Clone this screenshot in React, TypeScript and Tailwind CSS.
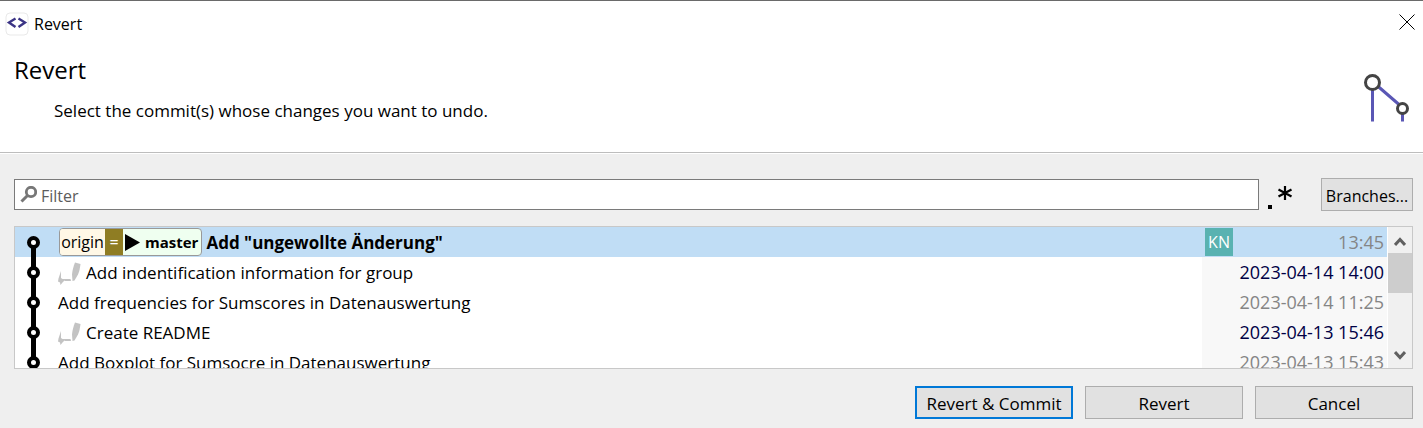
import type { ReactNode } from "react";

type Commit = {
  message: string;
  time: string;
  recent?: boolean;
  edited?: boolean;
  head?: boolean;
};

const commits: Commit[] = [
  { message: 'Add "ungewollte Änderung"', time: "13:45", head: true },
  { message: "Add indentification information for group", time: "2023-04-14 14:00", recent: true, edited: true },
  { message: "Add frequencies for Sumscores in Datenauswertung", time: "2023-04-14 11:25" },
  { message: "Create README", time: "2023-04-13 15:46", recent: true, edited: true },
  { message: "Add Boxplot for Sumsocre in Datenauswertung", time: "2023-04-13 15:43" },
];

function AppIcon() {
  return (
    <svg width="24" height="24" viewBox="0 0 24 24" fill="none" aria-hidden="true">
      <rect x="1" y="1" width="22" height="22" rx="4" fill="#fff" stroke="#e9e9e9" />
      <path d="M10.500 6.500 4 10.500l6.500 4.500M13.500 6.500 20 10.500l-6.500 4.500" stroke="#3b3485" strokeWidth="2.400" />
    </svg>
  );
}

function BranchLogo() {
  return (
    <svg width="46" height="50" viewBox="0 0 46 50" fill="none" aria-hidden="true">
      <path d="M9.500 17v31.500M14 12.500l22 19M39.500 40v8.500" stroke="#5a57b5" strokeWidth="3" />
      <circle cx="9.500" cy="9.500" r="7" fill="#fff" stroke="#444" strokeWidth="3" />
      <circle cx="39.500" cy="35.500" r="5" fill="#fff" stroke="#444" strokeWidth="3" />
    </svg>
  );
}

function SearchIcon() {
  return (
    <svg width="17" height="18" viewBox="0 0 17 18" fill="none" stroke="#777" aria-hidden="true">
      <circle cx="11" cy="6" r="4.700" strokeWidth="2.800" />
      <path d="M7.500 9.500 1.500 15.500" strokeWidth="3" />
    </svg>
  );
}

function GraphNode({ first }: { first?: boolean }) {
  return (
    <svg className="block" width="43" height="30" viewBox="0 0 43 30" aria-hidden="true">
      <rect x="16" y={first ? 15 : 0} width="5" height={first ? 15 : 30} fill="#000" />
      <circle cx="18.500" cy="15.500" r="4.500" fill="#fff" stroke="#000" strokeWidth="4" />
    </svg>
  );
}

function EditedIcon() {
  return (
    <svg className="shrink-0" width="28" height="30" viewBox="0 0 28 30" fill="#c3c3c3" aria-hidden="true">
      <path d="M3 14v7l1.500 1h8l0.500 2H7l-0.500-0.500L4.500 25.500 2.500 28 2 25.500 0 24.500 0.500 21.500z" />
      <path d="M17 5.500l5.500 1.500c-0.500 4-1 7-2.500 10.500l-3.500 6-2 0.500-0.500-6.500c0.500-5 1.500-8 3-12z" />
    </svg>
  );
}

function RefBadge() {
  return (
    <span className="ml-px mr-1 flex h-7 overflow-hidden rounded border border-[#999] bg-[#effff0] text-base leading-[26px]">
      <span className="w-[45px] bg-[#fff8e6] text-center">origin</span>
      <span className="w-[18px] bg-[#8f7d23] text-center text-white">=</span>
      <svg className="ml-px mt-[5px]" width="17" height="17" viewBox="0 0 17 17" aria-hidden="true">
        <path d="M1 0v17L16 8.500z" fill="#000" />
      </svg>
      <span className="pl-1 pr-[3px] text-[15px] font-bold">master</span>
    </span>
  );
}

function DialogButton({ children, primary }: { children: ReactNode; primary?: boolean }) {
  return (
    <button
      type="button"
      className={
        primary
          ? "h-[33px] w-[158px] border-2 border-[#0078d7] bg-[#e1e1e1] pt-0.5"
          : "h-[33px] w-[158px] border border-[#adadad] bg-[#e1e1e1] pt-0.5"
      }
    >
      {children}
    </button>
  );
}

export default function App() {
  return (
    <div className="flex h-screen flex-col bg-[#efefef] font-['Open_Sans','Noto_Sans',sans-serif] text-[17px] leading-6 text-black">
      <header className="border-b border-[#bdbdbd] bg-white">
        <div className="flex h-[46px] items-center justify-between border-t border-[#6a6a6a] pl-[5px] pr-2">
          <div className="flex items-center gap-[5px]">
            <AppIcon />
            <span className="text-base">Revert</span>
          </div>
          <button type="button" aria-label="Close" className="-mt-1">
            <svg width="16" height="16" viewBox="0 0 16 16" stroke="#000" fill="none" aria-hidden="true">
              <path d="M0.500 0.500l15 15M15.500 0.500l-15 15" />
            </svg>
          </button>
        </div>
        <div className="flex h-[106px] justify-between px-3.5">
          <div className="pt-2">
            <h1 className="text-2xl leading-8">Revert</h1>
            <p className="pl-10 pt-[13px]">Select the commit(s) whose changes you want to undo.</p>
          </div>
          <div className="pt-[27px]">
            <BranchLogo />
          </div>
        </div>
      </header>

      <main className="flex min-h-0 flex-1 flex-col border-t border-white pb-[9px] pl-3.5 pr-2.5 pt-6">
        <div className="flex items-center">
          <label className="flex h-[31px] flex-1 items-center gap-1 border border-[#7a7a7a] bg-white pl-[5px]">
            <SearchIcon />
            <input
              type="text"
              aria-label="Filter"
              placeholder="Filter"
              className="h-full min-w-0 flex-1 bg-transparent pt-0.5 text-base outline-none placeholder:text-[#5c5c5c]"
            />
          </label>
          <button type="button" aria-label="Regular expression" className="flex w-[62px] justify-start pl-[9px]">
            <svg width="26" height="28" viewBox="0 0 26 28" aria-hidden="true">
              <rect x="0" y="24" width="4" height="4" fill="#000" />
              <path d="M17 5v14M10.500 8.500l13 7M23.500 8.500l-13 7" stroke="#000" strokeWidth="2.200" />
            </svg>
          </button>
          <button type="button" className="h-[33px] w-[92px] border border-[#adadad] bg-[#e1e1e1] pt-0.5 text-base">
            Branches...
          </button>
        </div>

        <div className="mt-[15px] flex min-h-0 flex-1 overflow-hidden border border-[#c8c8c8] bg-white">
          <div className="min-w-0 flex-1 overflow-hidden">
            <table className="w-full table-fixed border-collapse">
              <colgroup>
                <col className="w-[43px]" />
                <col />
                <col className="w-[185px]" />
              </colgroup>
              <tbody>
                {commits.map((commit) => (
                  <tr key={commit.message} className={commit.head ? "h-[30px] bg-[#c0ddf5]" : "h-[30px] bg-white"}>
                    <td className="p-0">
                      <GraphNode first={commit.head} />
                    </td>
                    <td className="p-0">
                      <div className="flex h-[30px] items-center whitespace-nowrap">
                        {commit.head && <RefBadge />}
                        {commit.edited && <EditedIcon />}
                        <span className={commit.head ? "pt-px font-bold" : "pt-px"}>{commit.message}</span>
                      </div>
                    </td>
                    <td className={commit.head ? "p-0" : "bg-[#f8f8f8] p-0"}>
                      <div className="flex h-[30px] items-center justify-between px-[3px]">
                        {commit.head && (
                          <span className="flex size-7 items-center justify-center bg-[#59b2b1] text-base text-white">
                            KN
                          </span>
                        )}
                        <time
                          className={
                            commit.recent
                              ? "ml-auto text-lg leading-6 text-[#000045]"
                              : "ml-auto text-lg leading-6 text-[#858585]"
                          }
                        >
                          {commit.time}
                        </time>
                      </div>
                    </td>
                  </tr>
                ))}
              </tbody>
            </table>
          </div>
          <div className="flex w-[25px] flex-col border-l border-white bg-[#f0f0f0]">
            <button type="button" aria-label="Scroll up" className="flex h-[26px] items-center justify-center pt-1">
              <svg width="12" height="10" viewBox="0 0 12 10" fill="none" stroke="#606060" strokeWidth="3" aria-hidden="true">
                <path d="M1 8 6 2.500l5 5.500" />
              </svg>
            </button>
            <div className="h-10 bg-[#cdcdcd]" />
            <button type="button" aria-label="Scroll down" className="mt-auto flex h-[26px] items-center justify-center">
              <svg width="12" height="10" viewBox="0 0 12 10" fill="none" stroke="#606060" strokeWidth="3" aria-hidden="true">
                <path d="M1 2 6 7.500l5-5.500" />
              </svg>
            </button>
          </div>
        </div>

        <footer className="mt-[17px] flex justify-end gap-3">
          <DialogButton primary>Revert &amp; Commit</DialogButton>
          <DialogButton>Revert</DialogButton>
          <DialogButton>Cancel</DialogButton>
        </footer>
      </main>
    </div>
  );
}
